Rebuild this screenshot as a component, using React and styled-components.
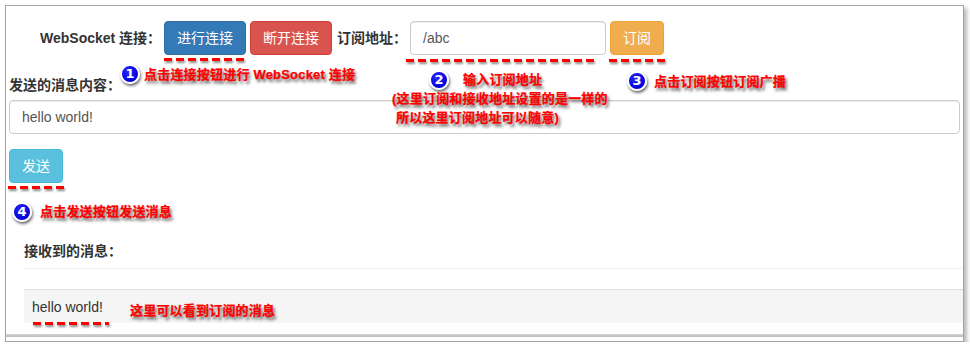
import React from 'react'
import styled, { createGlobalStyle } from 'styled-components'

const GlobalStyle = createGlobalStyle`
  html, body {
    margin: 0;
    padding: 0;
    background: #fff;
  }
  body {
    font-family: "Liberation Sans", Arial, "Noto Sans CJK SC", sans-serif;
    font-size: 14px;
    color: #333;
  }
`

const Frame = styled.div`
  position: relative;
  margin: 5px 0 0 5px;
  width: 957px;
  height: 335px;
  border: 1px solid #a3a3a3;
  box-shadow: 3px 3px 4px rgba(0, 0, 0, 0.28);
  overflow: hidden;
  display: flex;
  flex-direction: column;
  background: #fff;
`

const Content = styled.div`
  padding: 15px 3px 0 3px;
  display: flex;
  flex-direction: column;
`

const Row = styled.div`
  display: flex;
  align-items: center;
  gap: 4px;
  height: 34px;
`

const Label = styled.label`
  display: block;
  font-weight: bold;
  line-height: 20px;
  color: #333;
  white-space: nowrap;
  width: ${props => props.$width || 'auto'};
  margin-left: ${props => props.$left || 0}px;
  margin-top: ${props => props.$top || 0}px;
  margin-bottom: ${props => props.$bottom || 0}px;
`

const Button = styled.button`
  font-family: "Liberation Sans", Arial, "Noto Sans CJK SC", sans-serif;
  font-size: 14px;
  line-height: 20px;
  padding: 6px 12px;
  height: 34px;
  border: 1px solid ${props => props.$border};
  background: ${props => props.$bg};
  color: #fff;
  border-radius: 4px;
  cursor: pointer;
  align-self: flex-start;
`

const Input = styled.input`
  box-sizing: border-box;
  height: 34px;
  width: ${props => props.$width || '100%'};
  padding: 6px 12px;
  font-family: "Liberation Sans", Arial, "Noto Sans CJK SC", sans-serif;
  font-size: 14px;
  color: #555;
  border: 1px solid #ccc;
  border-radius: 4px;
  box-shadow: inset 0 1px 1px rgba(0, 0, 0, 0.075);
  outline: none;
`

const SendRow = styled.div`
  margin-top: 15px;
  display: flex;
`

const Received = styled.div`
  margin-left: 15px;
  width: 1000px;
`

const Rule = styled.div`
  height: 1px;
  background: #eee;
  margin-top: 7px;
`

const Panel = styled.div`
  margin-top: 20px;
  height: 34px;
  border-top: 1px solid #ddd;
  background: #f5f5f5;
  padding: 7px 8px 0;
  box-sizing: border-box;
  line-height: 20px;
  color: #333;
`

const Band = styled.div`
  margin-top: auto;
  margin-bottom: 4px;
  height: 3px;
  background: linear-gradient(#d2d2d2, #bdbdbd);
`

/* annotations drawn over the page */
const Dash = styled.div`
  position: absolute;
  left: ${props => props.$x}px;
  top: ${props => props.$y}px;
  width: ${props => props.$w}px;
  height: 3px;
  background: repeating-linear-gradient(90deg, #ff0000 0 8px, transparent 8px 12px);
  filter: drop-shadow(1px 2px 1px rgba(0, 0, 0, 0.45));
`

const Badge = styled.div`
  position: absolute;
  left: ${props => props.$x}px;
  top: ${props => props.$y}px;
  width: 16px;
  height: 16px;
  border-radius: 50%;
  border: 2px solid #fff;
  background: radial-gradient(circle at 40% 35%, #2a2aff, #0000d8 70%);
  box-shadow: 1px 2px 3px rgba(0, 0, 0, 0.6);
  color: #fff;
  font-family: "DejaVu Sans", sans-serif;
  font-weight: bold;
  font-size: 13px;
  line-height: 16px;
  text-align: center;
`

const Note = styled.div`
  position: absolute;
  left: ${props => props.$x}px;
  top: ${props => props.$y}px;
  color: #ff0000;
  font-family: "Liberation Sans", Arial, "Noto Sans CJK SC", sans-serif;
  font-weight: bold;
  font-size: 13px;
  letter-spacing: 0.2px;
  line-height: 19px;
  white-space: nowrap;
  -webkit-text-stroke: 0.25px #ff0000;
  text-shadow: 2px 3px 3px rgba(0, 0, 0, 0.6);
`

const NoteLine = styled.div`
  padding-left: ${props => props.$indent || 0}px;
`

export default function App() {
  return (
    <>
      <GlobalStyle />
      <Frame>
        <Content>
          <Row>
            <Label $left={31} $width="120px">WebSocket 连接：</Label>
            <Button $bg="#337ab7" $border="#2e6da4">进行连接</Button>
            <Button $bg="#d9534f" $border="#d43f3a">断开连接</Button>
            <Label $left={1} $width="69px">订阅地址：</Label>
            <Input $width="196px" defaultValue="/abc" />
            <Button $bg="#f0ad4e" $border="#eea236">订阅</Button>
          </Row>
          <Label $top={20} $bottom={5}>发送的消息内容：</Label>
          <Input defaultValue="hello world!" />
          <SendRow>
            <Button $bg="#5bc0de" $border="#46b8da">发送</Button>
          </SendRow>
          <Received>
            <Label $top={58}>接收到的消息：</Label>
            <Rule />
            <Panel>hello world!</Panel>
          </Received>
        </Content>
        <Band />

        <Dash $x={158} $y={52} $w={84} />
        <Dash $x={400} $y={53} $w={192} />
        <Dash $x={603} $y={53} $w={60} />
        <Dash $x={2} $y={180} $w={60} />
        <Dash $x={27} $y={316} $w={76} />

        <Badge $x={114} $y={58}>1</Badge>
        <Note $x={138} $y={59}>点击连接按钮进行 WebSocket 连接</Note>

        <Badge $x={423} $y={64}>2</Badge>
        <Note $x={386} $y={64}>
          <NoteLine $indent={71}>输入订阅地址</NoteLine>
          <NoteLine>(这里订阅和接收地址设置的是一样的</NoteLine>
          <NoteLine $indent={4}>所以这里订阅地址可以随意)</NoteLine>
        </Note>

        <Badge $x={621} $y={65}>3</Badge>
        <Note $x={648} $y={66}>点击订阅按钮订阅广播</Note>

        <Badge $x={6} $y={196}>4</Badge>
        <Note $x={34} $y={196}>点击发送按钮发送消息</Note>

        <Note $x={124} $y={295}>这里可以看到订阅的消息</Note>
      </Frame>
    </>
  )
}
